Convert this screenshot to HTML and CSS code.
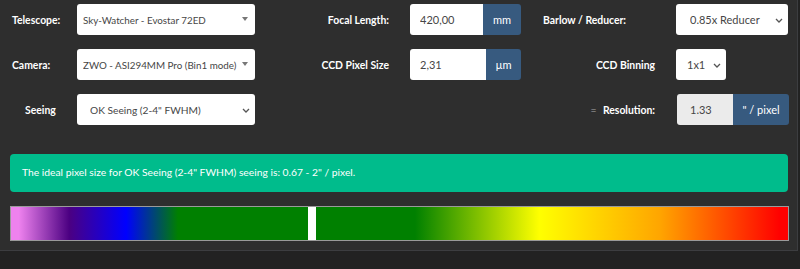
FILE: index.html
```html
<!DOCTYPE html>
<html>
    <head>
        <link rel="stylesheet" href="styles.css">
    </head>
    <body>
        <div class="panel">
            <div class="row">
                <label class="lbl lbl-first">Telescope:</label>
                <div class="sel sel-main">
                    <select><option>Sky-Watcher - Evostar 72ED</option></select>
                    <span class="tri"></span>
                </div>
                <label class="lbl lbl-mid">Focal Length:</label>
                <div class="group">
                    <input type="text" value="420,00" class="g-focal"/>
                    <span class="addon">mm</span>
                </div>
                <label class="lbl lbl-last lbl-left">Barlow / Reducer:</label>
                <div class="sel sel-barlow">
                    <select><option>0.85x Reducer</option></select>
                    <span class="chev"><svg width="8" height="5" viewBox="0 0 8 5"><path d="M1 1 L4 4 L7 1" fill="none" stroke="#555" stroke-width="1.3"/></svg></span>
                </div>
            </div>
            <div class="row">
                <label class="lbl lbl-first">Camera:</label>
                <div class="sel sel-main">
                    <select><option>ZWO - ASI294MM Pro (Bin1 mode)</option></select>
                    <span class="tri"></span>
                </div>
                <label class="lbl lbl-mid">CCD Pixel Size</label>
                <div class="group">
                    <input type="text" value="2,31" class="g-pixel"/>
                    <span class="addon">µm</span>
                </div>
                <label class="lbl lbl-last">CCD Binning</label>
                <div class="sel sel-bin">
                    <select><option>1x1</option></select>
                    <span class="chev"><svg width="8" height="5" viewBox="0 0 8 5"><path d="M1 1 L4 4 L7 1" fill="none" stroke="#555" stroke-width="1.3"/></svg></span>
                </div>
            </div>
            <div class="row">
                <label class="lbl lbl-first lbl-seeing">Seeing</label>
                <div class="sel sel-main sel-seeing">
                    <select><option>OK Seeing (2-4" FWHM)</option></select>
                    <span class="chev"><svg width="8" height="5" viewBox="0 0 8 5"><path d="M1 1 L4 4 L7 1" fill="none" stroke="#555" stroke-width="1.3"/></svg></span>
                </div>
                <span class="spacer"></span>
                <label class="lbl lbl-last"><span class="eq">=</span> Resolution:</label>
                <div class="group group-res">
                    <input type="text" value="1.33" disabled class="g-res"/>
                    <span class="addon addon-res">" / pixel</span>
                </div>
            </div>
            <div class="alert">The ideal pixel size for OK Seeing (2-4" FWHM) seeing is: 0.67 - 2" / pixel.</div>
            <div class="scale">
                <div class="marker"></div>
            </div>
        </div>
    </body>
</html>
```

FILE: styles.css
```css
*, *:after, *:before {
    box-sizing: border-box;
    margin: 0;
    padding: 0;
}
body {
    background: #222;
    font-family: Lato, "Open Sans", sans-serif;
    color: #FFF;
    width: 800px;
    height: 269px;
    overflow: hidden;
}
.panel {
    width: 798px;
    background: #2e2e2e;
    border-right: 1px solid #3c3d40;
    border-bottom: 1px solid #3c3d40;
    padding: 4px 0 9px 10px;
}
.row {
    display: flex;
    align-items: center;
    height: 31px;
    margin-bottom: 14px;
}
.row:nth-child(3) {
    margin-bottom: 29px;
}
.lbl {
    font-size: 10.4px;
    font-weight: bold;
}
.lbl-first {
    width: 67px;
    padding-left: 2px;
}
.lbl-seeing {
    padding-left: 15px;
}
.lbl-mid {
    width: 134px;
    text-align: right;
    margin-right: 21px;
}
.lbl-last {
    width: 155px;
    text-align: right;
    padding-right: 21px;
}
.lbl-left {
    text-align: left;
    padding-left: 22px;
}
.eq {
    color: #aaa;
    font-weight: normal;
    margin-right: 4px;
}
.spacer {
    width: 266px;
}
.sel {
    position: relative;
    height: 31px;
}
.sel select {
    appearance: none;
    -webkit-appearance: none;
    width: 100%;
    height: 100%;
    border: none;
    border-radius: 3px;
    background: #FFF;
    color: #464646;
    font-family: Lato, "Open Sans", sans-serif;
    font-size: 11px;
    padding-left: 6px;
}
.sel-main {
    width: 178px;
}
.sel-main select {
    font-size: 9.8px;
}
.sel-seeing select {
    font-size: 10.2px;
    padding-left: 13px;
}
.sel-barlow {
    width: 112px;
}
.sel-barlow select {
    padding-left: 14px;
}
.sel-bin {
    width: 50px;
}
.sel-bin select {
    padding-left: 11px;
}
.tri {
    position: absolute;
    top: 13px;
    right: 7px;
    border-left: 3px solid transparent;
    border-right: 3px solid transparent;
    border-top: 4px solid #777;
}
.chev {
    position: absolute;
    top: 13px;
    right: 5px;
    line-height: 0;
}
.group {
    display: flex;
    width: 111px;
    height: 31px;
}
.group input {
    border: none;
    border-radius: 3px 0 0 3px;
    background: #FFF;
    color: #464646;
    font-family: Lato, "Open Sans", sans-serif;
    font-size: 11px;
    padding-left: 10px;
}
.g-focal {
    width: 73px;
}
.g-pixel {
    width: 76px;
}
.addon {
    flex: 1;
    background: #375a7f;
    border-radius: 0 3px 3px 0;
    font-size: 11px;
    display: flex;
    align-items: center;
    justify-content: center;
}
.group-res {
    width: 112px;
    margin-left: 1px;
}
.group-res input {
    width: 56px;
    background: #ebebeb;
    padding-left: 13px;
}
.alert {
    width: 778px;
    height: 38px;
    background: #00bc8c;
    border-radius: 4px;
    font-size: 10.3px;
    padding: 12px 12px;
    margin-bottom: 14px;
}
.scale {
    position: relative;
    width: 779px;
    height: 35px;
    border: 1px solid #9a9a9a;
    background: linear-gradient(to right, #ee82ee 0%, #ee82ee 1%, #4b0082 7.5%, #0000ff 14.8%, #008000 21.5%, #008000 52%, #ffff00 68%, #ffa500 83.5%, #ff0000 99%);
}
.marker {
    position: absolute;
    top: 0;
    bottom: 0;
    left: 297px;
    width: 8px;
    background: #FFF;
}
```
